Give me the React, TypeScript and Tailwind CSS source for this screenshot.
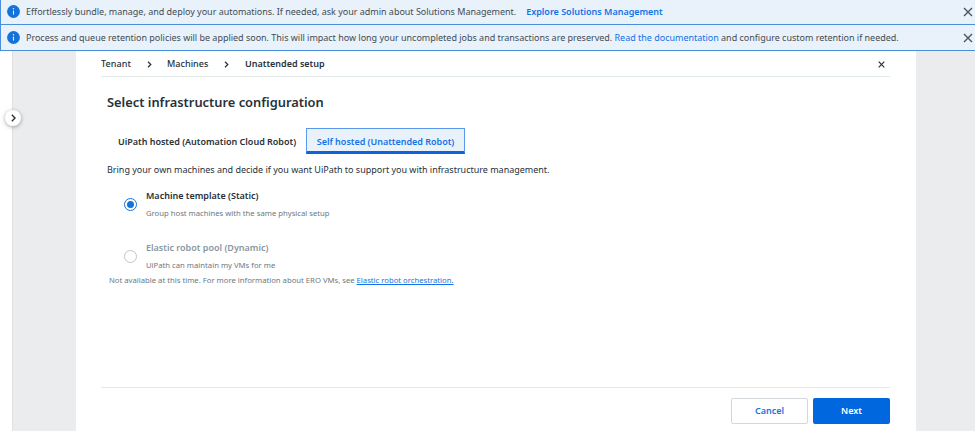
import type { ReactNode } from "react";

function InfoIcon() {
  return (
    <svg className="h-[13px] w-[13px] shrink-0" viewBox="0 0 13 13">
      <circle cx="6.5" cy="6.5" r="6.4" fill="#1473d6" />
      <path d="M6.5 5.6v4" stroke="#e9f1fa" strokeWidth="1.1" />
      <circle cx="6.5" cy="3.8" r="0.75" fill="#e9f1fa" />
    </svg>
  );
}

function Cross({ className }: { className: string }) {
  return (
    <svg className={className} viewBox="0 0 10 10" fill="none" stroke="currentColor">
      <path d="M1 1l8 8M9 1l-8 8" />
    </svg>
  );
}

function Chevron({ className }: { className: string }) {
  return (
    <svg className={className} viewBox="0 0 5 8" fill="none" stroke="currentColor" strokeWidth="1.4">
      <path d="M0.8 0.8L4 4L0.8 7.2" />
    </svg>
  );
}

function Banner({ children, className }: { children: ReactNode; className: string }) {
  return (
    <div className={`flex items-center border-l border-b border-[#4a8fdb] bg-[#e9f1fb] pl-[6px] pr-[2px] text-[9px] leading-[14px] tracking-[-0.018px] text-[#414d54] ${className}`}>
      <InfoIcon />
      <div className="ml-[6px] flex-1 whitespace-nowrap">{children}</div>
      <button aria-label="Dismiss" className="text-[#4a565e]">
        <Cross className="block h-[10px] w-[10px] stroke-[1.4]" />
      </button>
    </div>
  );
}

function Option({ title, note, selected }: { title: string; note: string; selected?: boolean }) {
  return (
    <div className="flex items-center">
      <span className={`flex h-[13px] w-[13px] items-center justify-center rounded-full border ${selected ? "border-[#1473d6]" : "border-[#bfc5c9]"}`}>
        {selected && <span className="h-[7px] w-[7px] rounded-full bg-[#1473d6]" />}
      </span>
      <div className="ml-[9px]">
        <div className={`pt-px text-[9px] leading-[18px] font-semibold ${selected ? "text-[#273139]" : "text-[#8a97a0]"}`}>{title}</div>
        <div className="-mt-px text-[7.7px] leading-[18px] text-[#6b7882]">{note}</div>
      </div>
    </div>
  );
}

export default function App() {
  return (
    <div className="flex h-[431px] w-[975px] flex-col overflow-hidden bg-white font-['Noto_Sans',sans-serif] text-[#273139]">
      <Banner className="h-[25px] pb-px">
        Effortlessly bundle, manage, and deploy your automations. If needed, ask your admin about Solutions Management.
        <a className="ml-[10px] font-semibold text-[#1373e6]">Explore Solutions Management</a>
      </Banner>
      <Banner className="h-[26px]">
        Process and queue retention policies will be applied soon. This will impact how long your uncompleted jobs and transactions are preserved.{" "}
        <a className="text-[#1373e6]">Read the documentation</a> and configure custom retention if needed.
      </Banner>
      <div className="flex min-h-0 flex-1">
        <aside className="relative w-3 shrink-0 bg-white">
          <button aria-label="Expand" className="absolute top-[59px] left-[5px] flex h-[16px] w-[16px] items-center justify-center rounded-full bg-white shadow-[0_1px_4px_rgba(0,0,0,0.35)]">
            <Chevron className="h-[8px] w-[5px]" />
          </button>
        </aside>
        <div className="flex flex-1 border-l border-[#dfe1e3] bg-[#ebecee] pr-[59px] pl-[63px]">
          <main className="flex flex-1 flex-col bg-white pr-[26px] pl-[25px]">
            <header className="flex h-[26px] items-center border-b border-[#e3eaea] pr-[5px] text-[9px] leading-[14px] font-medium">
              <span className="w-[46px] tracking-[0.08px]">Tenant</span>
              <Chevron className="mt-px h-[7px] w-[5px]" />
              <span className="ml-[15px] w-[57px] tracking-[0.04px]">Machines</span>
              <Chevron className="mt-px h-[7px] w-[5px]" />
              <span className="ml-[16px] font-semibold">Unattended setup</span>
              <Cross className="mt-px ml-auto h-[7px] w-[7px] stroke-[1.7]" />
            </header>
            <div className="flex-1 pl-[6px]">
              <h1 className="mt-[16px] text-[12.87px] leading-[18px] font-semibold">Select infrastructure configuration</h1>
              <div className="mt-[17px] flex h-[26px] items-center text-[9px] leading-[14px] font-semibold tracking-[-0.018px]">
                <div className="w-[199px] pt-px pl-[11px] whitespace-nowrap">UiPath hosted (Automation Cloud Robot)</div>
                <div className="flex h-[26px] w-[159px] items-center justify-center border border-b-[3px] border-[#5b9aea] border-b-[#0f62d8] bg-[#e9f1fb] pt-[3px] whitespace-nowrap text-[#1373e6]">
                  Self hosted (Unattended Robot)
                </div>
              </div>
              <p className="mt-[7px] text-[9px] leading-[18px] tracking-[-0.01px]">Bring your own machines and decide if you want UiPath to support you with infrastructure management.</p>
              <div className="mt-[7px] ml-[17px] flex flex-col gap-[16px]">
                <Option title="Machine template (Static)" note="Group host machines with the same physical setup" selected />
                <Option title="Elastic robot pool (Dynamic)" note="UiPath can maintain my VMs for me" />
              </div>
              <p className="-mt-px ml-[2px] text-[7.7px] leading-[14px] text-[#6b7882]">
                Not available at this time. For more information about ERO VMs, see <a className="text-[#1373e6] underline">Elastic robot orchestration.</a>
              </p>
            </div>
            <footer className="flex h-[44px] justify-end gap-[5px] border-t border-[#e3eaea] pt-[10px] text-[9px] font-semibold">
              <button className="h-[26px] w-[77px] rounded-[2px] border border-[#d3d8dc] text-[#1373e6]">Cancel</button>
              <button className="h-[26px] w-[77px] rounded-[2px] bg-[#0067df] text-white">Next</button>
            </footer>
          </main>
        </div>
      </div>
    </div>
  );
}
